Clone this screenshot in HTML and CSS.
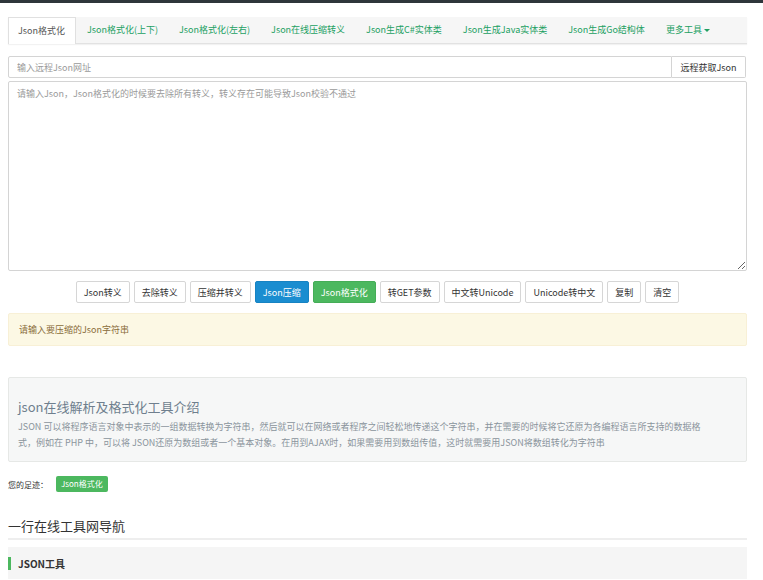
FILE: index.html
```html
<!DOCTYPE html>
<html lang="zh-CN">
<head>
<meta charset="utf-8">
<title>Json格式化</title>
<link rel="stylesheet" href="styles.css">
</head>
<body>
<div class="topbar"></div>
<div class="page">
  <ul class="tabs">
    <li class="tab active">Json格式化</li>
    <li class="tab">Json格式化(上下)</li>
    <li class="tab">Json格式化(左右)</li>
    <li class="tab">Json在线压缩转义</li>
    <li class="tab">Json生成C#实体类</li>
    <li class="tab">Json生成Java实体类</li>
    <li class="tab">Json生成Go结构体</li>
    <li class="tab">更多工具<span class="caret"></span></li>
  </ul>

  <div class="input-group">
    <input class="url-input" type="text" placeholder="输入远程Json网址">
    <button class="addon-btn">远程获取Json</button>
  </div>

  <textarea class="json-area" placeholder="请输入Json，Json格式化的时候要去除所有转义，转义存在可能导致Json校验不通过"></textarea>

  <div class="btn-row">
    <button class="btn">Json转义</button>
    <button class="btn">去除转义</button>
    <button class="btn">压缩并转义</button>
    <button class="btn btn-blue">Json压缩</button>
    <button class="btn btn-green">Json格式化</button>
    <button class="btn">转GET参数</button>
    <button class="btn">中文转Unicode</button>
    <button class="btn">Unicode转中文</button>
    <button class="btn">复制</button>
    <button class="btn">清空</button>
  </div>

  <div class="alert">请输入要压缩的Json字符串</div>

  <div class="well">
    <h3 class="well-title">json在线解析及格式化工具介绍</h3>
    <p class="well-text">JSON 可以将程序语言对象中表示的一组数据转换为字符串，然后就可以在网络或者程序之间轻松地传递这个字符串，并在需要的时候将它还原为各编程语言所支持的数据格式，例如在 PHP 中，可以将 JSON还原为数组或者一个基本对象。在用到AJAX时，如果需要用到数组传值，这时就需要用JSON将数组转化为字符串</p>
  </div>

  <div class="footprint">
    <span class="footprint-label">您的足迹：</span>
    <span class="badge">Json格式化</span>
  </div>

  <h2 class="nav-heading">一行在线工具网导航</h2>

  <div class="group-box">
    <span class="group-bar"></span>
    <span class="group-title">JSON工具</span>
  </div>
</div>
</body>
</html>
```

FILE: styles.css
```css
* {
  box-sizing: border-box;
}

html, body {
  margin: 0;
  padding: 0;
  background: #fff;
}

body {
  font-family: "Noto Sans CJK SC", "Noto Sans", sans-serif;
  font-size: 9px;
  color: #333;
  overflow: hidden;
}

.topbar {
  height: 3px;
  background: #2e363b;
}

.page {
  width: 763px;
  padding: 14px 16px 0 8px;
}

.tabs {
  list-style: none;
  margin: 0;
  padding: 0;
  display: flex;
  height: 27px;
  background: #f6f6f6;
  border-bottom: 1px solid #e2e2e2;
  box-shadow: 0 1px 1px rgba(0, 0, 0, 0.05);
}

.tab {
  padding: 0 10px 0 11px;
  line-height: 26px;
  color: #22a062;
  white-space: nowrap;
}

.tab.active {
  background: #fff;
  color: #555;
  border: 1px solid #e0e0e0;
  border-bottom: none;
  height: 27px;
  padding: 0 10px 0 9px;
  line-height: 25px;
}

.caret {
  display: inline-block;
  width: 0;
  height: 0;
  margin-left: 2px;
  vertical-align: middle;
  border-top: 3px solid #22a062;
  border-left: 3px solid transparent;
  border-right: 3px solid transparent;
}

.input-group {
  display: flex;
  height: 22px;
  margin-top: 12px;
}

.url-input {
  flex: 1;
  height: 22px;
  border: 1px solid #d4d4d4;
  border-radius: 2px 0 0 2px;
  padding: 0 8px;
  font-family: inherit;
  font-size: 9px;
  color: #555;
  outline: none;
}

.url-input::placeholder {
  color: #9a9a9a;
}

.addon-btn {
  height: 22px;
  width: 74px;
  margin-right: 1px;
  border: 1px solid #d4d4d4;
  border-left: none;
  border-radius: 0 2px 2px 0;
  background: #fff;
  font-family: inherit;
  font-size: 9px;
  color: #333;
  padding: 0;
}

.json-area {
  display: block;
  width: 100%;
  height: 190px;
  margin-top: 3px;
  border: 1px solid #d4d4d4;
  border-radius: 2px;
  padding: 5px 8px;
  font-family: inherit;
  font-size: 9px;
  line-height: 14px;
  color: #555;
  outline: none;
  resize: vertical;
}

.json-area::placeholder {
  color: #9a9a9a;
}

.btn-row {
  display: flex;
  justify-content: center;
  gap: 4px;
  margin-top: 10px;
}

.btn {
  height: 22px;
  padding: 0 7px;
  border: 1px solid #d6d6d6;
  border-radius: 2px;
  background: #fff;
  font-family: inherit;
  font-size: 9px;
  color: #333;
}

.btn-blue {
  background: #1a8dd0;
  border-color: #1783c2;
  color: #fff;
}

.btn-green {
  background: #4cb85f;
  border-color: #45ad57;
  color: #fff;
}

.alert {
  margin-top: 10px;
  height: 33px;
  line-height: 31px;
  padding: 0 10px;
  background: #fcf8e4;
  border: 1px solid #f8f0d6;
  border-radius: 2px;
  color: #8a6d3b;
}

.well {
  margin-top: 31px;
  height: 85px;
  padding: 19px 9px 0 9px;
  background: #f6f7f7;
  border: 1px solid #e6e8e6;
  border-radius: 2px;
}

.well-title {
  margin: 0;
  font-size: 13px;
  font-weight: normal;
  line-height: 20px;
  color: #6f7f8e;
}

.well-text {
  margin: 2px 0 0;
  width: 695px;
  line-height: 16px;
  color: #8a949c;
}

.footprint {
  display: flex;
  align-items: center;
  height: 16px;
  margin-top: 14px;
  font-size: 8px;
}

.footprint-label {
  color: #333;
  margin-right: 8px;
}

.badge {
  display: inline-block;
  height: 16px;
  line-height: 16px;
  padding: 0 5px;
  background: #4cb85f;
  color: #fff;
  border-radius: 2px;
  font-size: 8px;
}

.nav-heading {
  margin: 24px 0 0;
  font-size: 13px;
  font-weight: normal;
  line-height: 20px;
  padding-bottom: 2px;
  border-bottom: 2px solid #eeeeee;
  color: #333;
}

.group-box {
  display: flex;
  align-items: center;
  margin-top: 7px;
  height: 32px;
  background: #f5f5f5;
}

.group-bar {
  width: 3px;
  height: 13px;
  background: #4cb85f;
  margin-right: 7px;
}

.group-title {
  font-size: 10px;
  font-weight: bold;
  color: #333;
}
```
